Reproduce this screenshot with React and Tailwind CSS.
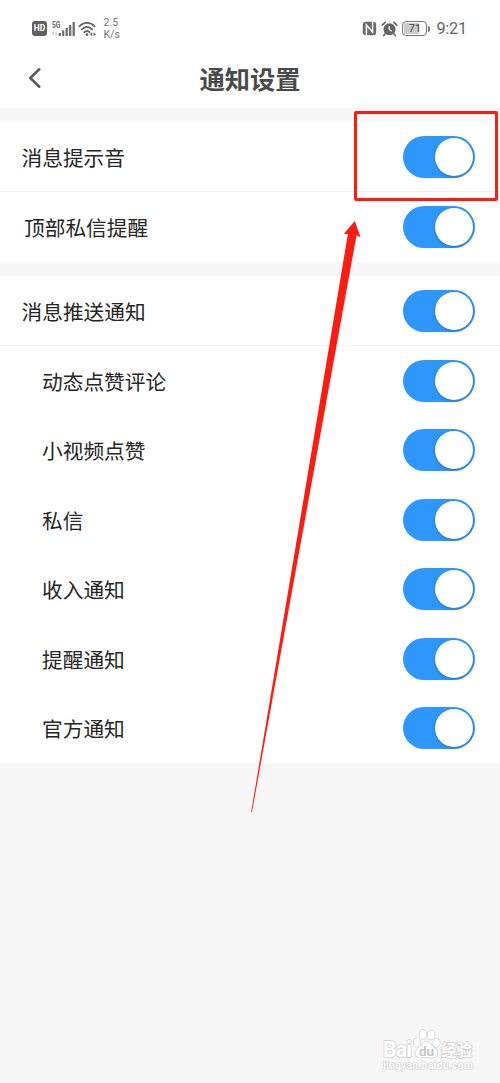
import React, { useState } from 'react'

const groups = [
  {
    id: 'sound',
    items: [
      { label: '消息提示音', rowClass: 'h-[70px] pl-[21.5px] border-b border-[#f0f0f0]' },
      { label: '顶部私信提醒', rowClass: 'h-[70px] pl-[24px]' }
    ]
  },
  {
    id: 'push',
    items: [
      { label: '消息推送通知', rowClass: 'h-[70px] pl-[21.5px] border-b border-[#f0f0f0]' },
      { label: '动态点赞评论', rowClass: 'h-[69.5px] pl-[42px]' },
      { label: '小视频点赞', rowClass: 'h-[69.5px] pl-[42px]' },
      { label: '私信', rowClass: 'h-[69.5px] pl-[42px]' },
      { label: '收入通知', rowClass: 'h-[69.5px] pl-[42px]' },
      { label: '提醒通知', rowClass: 'h-[69.5px] pl-[42px]' },
      { label: '官方通知', rowClass: 'h-[69.5px] pl-[42px]' }
    ]
  }
]

function StatusBar() {
  return (
    <div className="flex h-[50px] items-center pt-[7px] pl-[32px] pr-[33px] text-[#666]">
      {/* HD badge */}
      <div className="h-[15px] w-[15px] rounded-[3px] bg-[#606060] text-center text-[8.5px] font-bold leading-[15px] text-white">HD</div>
      {/* Mobile signal */}
      <div className="relative ml-[4px] h-[16px] w-[25px]">
        <span className="absolute left-[1px] top-0 origin-top-left scale-x-[0.75] text-[9px] font-bold leading-[9px]">5G</span>
        <svg width="25" height="16" viewBox="0 0 25 16" className="absolute inset-0">
          <path d="M2.500 14.500v-4L1 12M5 10.500v4L6.500 13" stroke="#c4c4c4" fill="none" />
          <path d="M8.800 12v3M12.200 9.500V15M15.700 7v8M19.200 4v11M22.700 1v14" stroke="#6a6a6a" strokeWidth="2.200" />
        </svg>
      </div>
      {/* Wifi */}
      <svg width="19" height="16" viewBox="0 0 19 16" className="ml-[2px]">
        <g fill="none" stroke="#666" strokeWidth="1.800" strokeLinecap="round">
          <path d="M1.400 5.300C5.600.7 12.400.7 16.600 5.300" />
          <path d="M3.800 8.400c3-3.200 7.400-3.200 10.400 0" />
          <path d="M6.400 11.200c1.500-1.400 3.700-1.400 5.200 0" />
        </g>
        <circle cx="9" cy="13.700" r="1.400" fill="#666" />
        <path d="M11.700 13.300l2.500-2v4zM18 13.300l-2.500-2v4z" fill="#666" />
      </svg>
      <div className="ml-[6.5px] pt-[1px] text-[10.5px] leading-[12.5px] text-[#777]">
        <div>2.5</div>
        <div>K/s</div>
      </div>

      <div className="ml-auto flex items-center">
        {/* NFC */}
        <svg width="15" height="15" viewBox="0 0 15 15">
          <rect x="0.800" y="0.800" width="13.400" height="13.400" rx="3" fill="#6a6a6a" />
          <path d="M4.400 15V4l6.200 7V0" fill="none" stroke="#fff" strokeWidth="1.500" />
        </svg>
        {/* Alarm */}
        <svg width="17" height="16" viewBox="0 0 17 16" className="ml-[4px]">
          <path d="M1.200 4.200L4.200 1.400M15.800 4.200l-3-2.800M4.300 12.500L2.600 14.700M12.700 12.500l1.700 2.200" stroke="#666" strokeWidth="1.600" strokeLinecap="round" />
          <circle cx="8.500" cy="8.300" r="6" fill="#666" />
          <path d="M8.300 4.900v3.800l2.400 1.400" fill="none" stroke="#fff" strokeWidth="1.300" />
        </svg>
        {/* Battery */}
        <div className="relative ml-[4px] h-[15px] w-[25px] rounded-[4px] border-[1.5px] border-[#777] p-[1px]">
          <div className="h-full w-[15px] rounded-[1px] bg-[#ccc]" />
          <span className="absolute inset-0 text-center text-[11px] leading-[14px] text-[#444]">71</span>
        </div>
        <div className="ml-[1px] h-[6px] w-[2px] rounded-r bg-[#777]" />
        <span className="ml-[6px] pt-[1px] text-[16.3px] leading-[20px] tracking-[-0.2px]">9:21</span>
      </div>
    </div>
  )
}

function Toggle({ label }) {
  const [on, setOn] = useState(true)

  return (
    <button
      type="button"
      role="switch"
      aria-checked={on}
      aria-label={label}
      onClick={() => setOn(!on)}
      className={`flex h-[42px] w-[72px] items-center rounded-full px-[2px] ${on ? 'justify-end bg-[#2e97fd]' : 'justify-start bg-gray-300'}`}
    >
      <span className="h-[38px] w-[38px] rounded-full bg-white shadow-[0_1px_3px_rgba(0,0,0,0.25)]" />
    </button>
  )
}

// Outlined white logo in the bottom right corner
function Watermark() {
  return (
    <svg width="98" height="48" viewBox="0 0 98 48" className="absolute left-[380px] top-[1026px]">
      <g fill="#fff" stroke="#d2d2d2" strokeWidth="1.600" strokeLinejoin="round" className="[paint-order:stroke]">
        <text x="3" y="31" fontSize="21.500" fontWeight="700" textLength="29">Bai</text>
        <ellipse cx="37" cy="16.500" rx="3.200" ry="4.200" transform="rotate(-15 37 16.500)" />
        <ellipse cx="43" cy="8.500" rx="3.400" ry="4.600" />
        <ellipse cx="51" cy="9" rx="3.400" ry="4.600" transform="rotate(10 51 9)" />
        <ellipse cx="56.500" cy="17" rx="3.200" ry="4" transform="rotate(15 56.500 17)" />
        <path d="M46.500 15.500c3 0 4 3 6.500 5 3 2.600 5 4.300 4.400 7.400-.6 3.500-3.600 3.900-6 3.600-3.300-.5-6.500-.5-9.800 0-2.600.4-5.600-.4-6-3.600-.4-3 1.600-4.900 4.400-7.400 2.500-2 3.500-5 6.500-5z" />
        <text x="61" y="30" fontSize="15.500" fontWeight="700" textLength="31">经验</text>
        <text x="3" y="43" fontSize="10.500" fontWeight="500" strokeWidth="1.200" textLength="90">jingyan.baidu.com</text>
      </g>
      <text x="46.500" y="29.500" textAnchor="middle" fontSize="13.500" fontWeight="700" fill="#c6c6c6">du</text>
    </svg>
  )
}

export default function App() {
  return (
    <div className="relative h-[1083px] w-[500px] overflow-hidden bg-[#f7f7f7] font-[Roboto,'Noto_Sans_CJK_SC',sans-serif]">
      <div className="bg-white">
        <StatusBar />
        {/* Header */}
        <div className="relative flex h-[58px] items-center justify-center">
          <button type="button" aria-label="返回" className="absolute left-[27px] top-[17px]">
            <svg width="16" height="22" viewBox="0 0 16 22">
              <path d="M12.300 2.300L3.300 11l9 8.700" fill="none" stroke="#5c5965" strokeWidth="2.600" strokeLinecap="round" strokeLinejoin="round" />
            </svg>
          </button>
          <h1 className="pt-[4px] text-[25.3px] font-bold leading-[36px] text-[#4a4a4a]">通知设置</h1>
        </div>
      </div>

      {/* Setting groups */}
      {groups.map((group) => (
        <div key={group.id} className="mt-[14px] bg-white">
          {group.items.map((item) => (
            <div key={item.label} className={`flex items-center justify-between pr-[25px] ${item.rowClass}`}>
              <span className="pt-[4px] text-[20.7px] leading-[30px] text-[#262626]">{item.label}</span>
              <Toggle label={item.label} />
            </div>
          ))}
        </div>
      ))}

      {/* Highlight box and arrow */}
      <div className="pointer-events-none absolute left-[354px] top-[111px] h-[90px] w-[144px] rounded-[2px] border-[3px] border-[#fe1c10]" />
      <svg width="500" height="1083" viewBox="0 0 500 1083" className="pointer-events-none absolute inset-0">
        <path d="M251.200 812L347.900 234L343.800 233.800L354.800 221L360.500 237.300L356.500 235.300L252 812z" fill="#fe1c10" />
      </svg>

      <Watermark />
    </div>
  )
}
